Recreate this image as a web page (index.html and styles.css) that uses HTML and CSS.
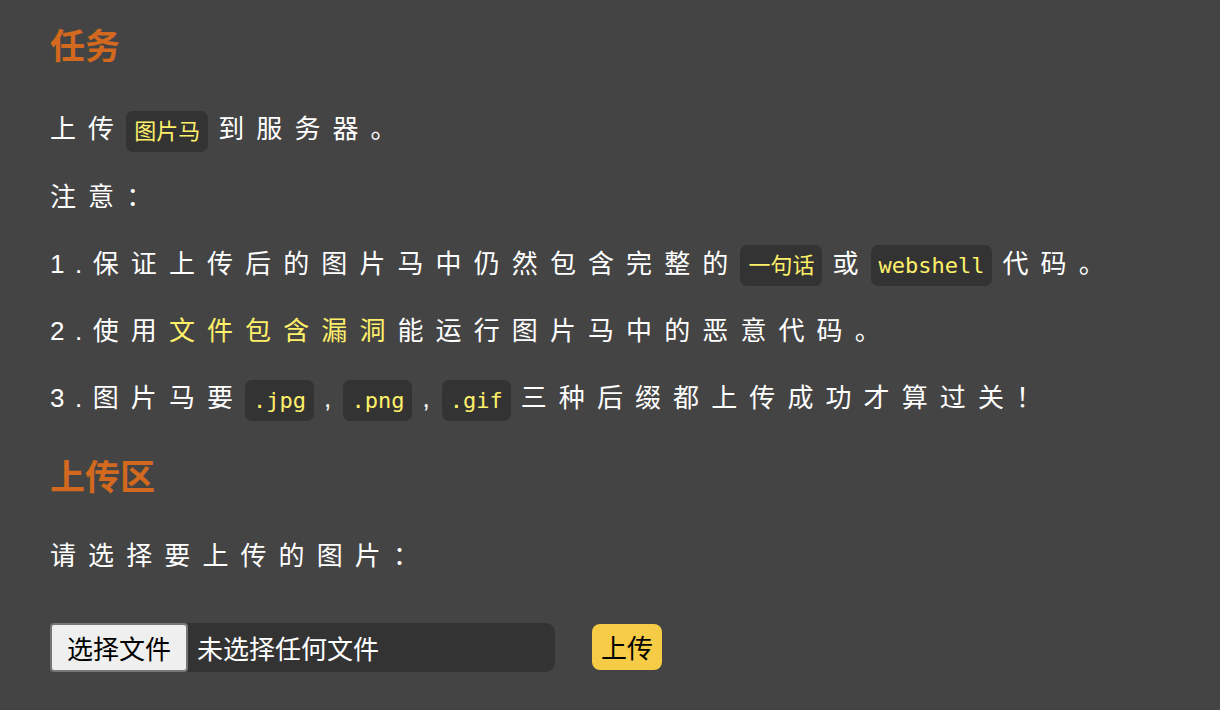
FILE: index.html
```html
<!DOCTYPE html>
<html lang="zh-CN">
<head>
<meta charset="utf-8">
<title>Upload</title>
<link rel="stylesheet" href="styles.css">
</head>
<body>
<main class="page">
  <h2 class="title title-task">任务</h2>
  <p class="line">上传<code class="tag">图片马</code>到服务器。</p>
  <p class="line">注意：</p>
  <p class="line"><span class="num">1.</span>保证上传后的图片马中仍然包含完整的<code class="tag">一句话</code>或<code class="tag">webshell</code>代码。</p>
  <p class="line"><span class="num">2.</span>使用<span class="hl">文件包含漏洞</span>能运行图片马中的恶意代码。</p>
  <p class="line"><span class="num">3.</span>图片马要<code class="tag">.jpg</code>,<code class="tag">.png</code>,<code class="tag">.gif</code>三种后缀都上传成功才算过关！</p>
  <h2 class="title title-upload">上传区</h2>
  <p class="line">请选择要上传的图片：</p>
  <form class="upload-form">
    <div class="file">
      <span class="file-btn">选择文件</span>
      <span class="file-name">未选择任何文件</span>
    </div>
    <button type="button" class="submit">上传</button>
  </form>
</main>
</body>
</html>
```
FILE: styles.css
```css
html, body {
  margin: 0;
  padding: 0;
  background: #444444;
}
body {
  font-family: "Liberation Sans", "Noto Sans CJK SC", sans-serif;
  color: #ffffff;
}
.page {
  padding: 0 50px;
}
.title {
  margin: 0;
  font-size: 35px;
  font-weight: bold;
  color: #d2691e;
  line-height: 50px;
}
.title-task {
  padding-top: 22px;
  margin-bottom: 36px;
}
.title-upload {
  margin-top: 32px;
  margin-bottom: 32px;
}
.line {
  margin: 0 0 24px;
  font-size: 26px;
  line-height: 43px;
  letter-spacing: 12.1px;
  white-space: nowrap;
}
.num {
  letter-spacing: 10.5px;
}
.tag {
  display: inline-block;
  font-family: "DejaVu Sans Mono", "Noto Sans CJK SC", monospace;
  font-size: 22px;
  line-height: 29px;
  letter-spacing: 0;
  color: #fff06a;
  background: #333333;
  border-radius: 7px;
  padding: 6px 8px;
  margin-right: 10px;
  vertical-align: middle;
}
.hl {
  color: #fff06a;
}
.upload-form {
  display: flex;
  align-items: center;
  gap: 37px;
  margin-top: 45px;
}
.file {
  display: flex;
  align-items: center;
  width: 505px;
  height: 49px;
  background: #333333;
  border-radius: 9px;
  font-family: "Noto Sans CJK SC", sans-serif;
  font-size: 26px;
}
.file-btn {
  box-sizing: border-box;
  height: 49px;
  display: flex;
  align-items: center;
  padding: 0 15px;
  background: #efefef;
  color: #000;
  border: 2px solid #767676;
  border-radius: 4px;
}
.file-name {
  padding-left: 9px;
  color: #fff;
}
.submit {
  font-family: "Noto Sans CJK SC", sans-serif;
  font-size: 26px;
  color: #000;
  background: #f6cb45;
  border: none;
  border-radius: 8px;
  height: 46px;
  padding: 0 9px;
  line-height: 46px;
}
```
